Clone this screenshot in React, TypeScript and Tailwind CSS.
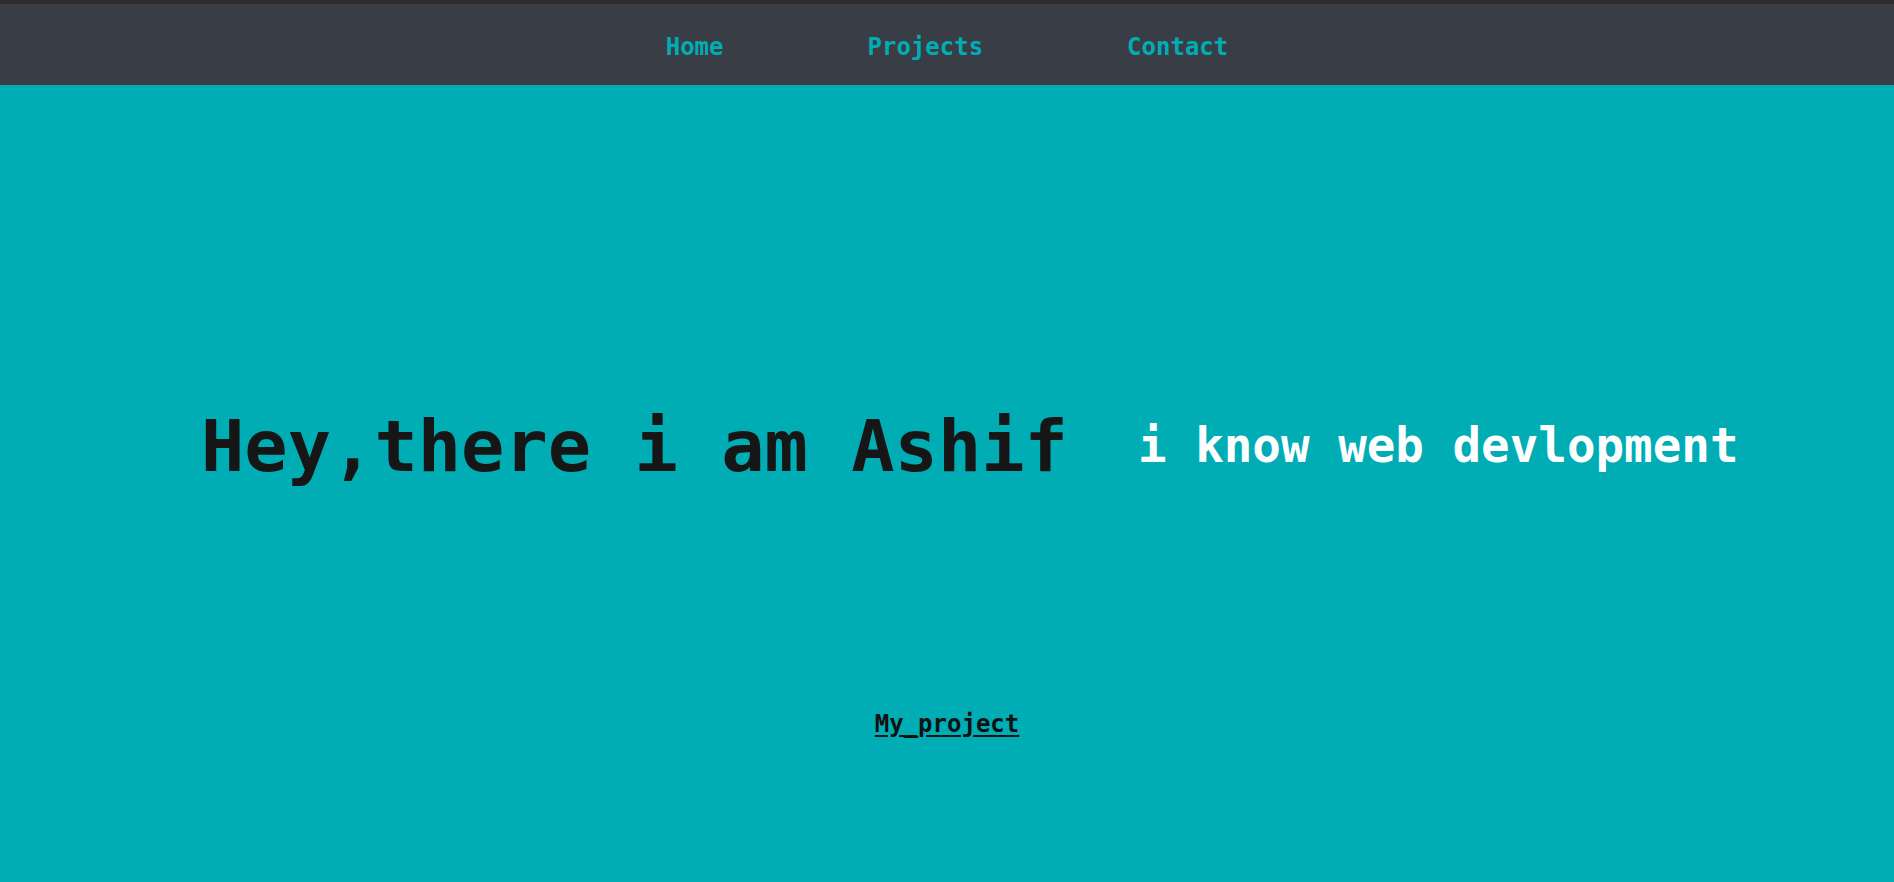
export default function App() {
  const mono = { fontFamily: '"DejaVu Sans Mono", "Liberation Mono", monospace' };
  return (
    <div className="min-h-[882px] flex flex-col bg-[#00adb5]" style={mono}>
      <div className="h-[4px] bg-[#2d2d2d]" />
      <nav className="h-[81px] pt-[4px] bg-[#393e46] flex items-center justify-center gap-[144px]">
        <a className="text-[24px] leading-none font-bold text-[#00adb5]">Home</a>
        <a className="text-[24px] leading-none font-bold text-[#00adb5]">Projects</a>
        <a className="text-[24px] leading-none font-bold text-[#00adb5]">Contact</a>
      </nav>
      <main className="flex flex-col">
        <div className="mt-[301px] h-[120px] flex items-center pl-[201px] gap-[70px]">
          <h1 className="text-[72px] leading-none font-bold text-[#161616]">Hey,there i am Ashif</h1>
          <h2 className="text-[47.5px] leading-none font-bold text-white">i know web devlopment</h2>
        </div>
        <div className="mt-[202px] flex justify-center">
          <a className="text-[24px] leading-[32px] font-semibold text-[#111111] underline underline-offset-[3px]">My_project</a>
        </div>
      </main>
    </div>
  );
}
